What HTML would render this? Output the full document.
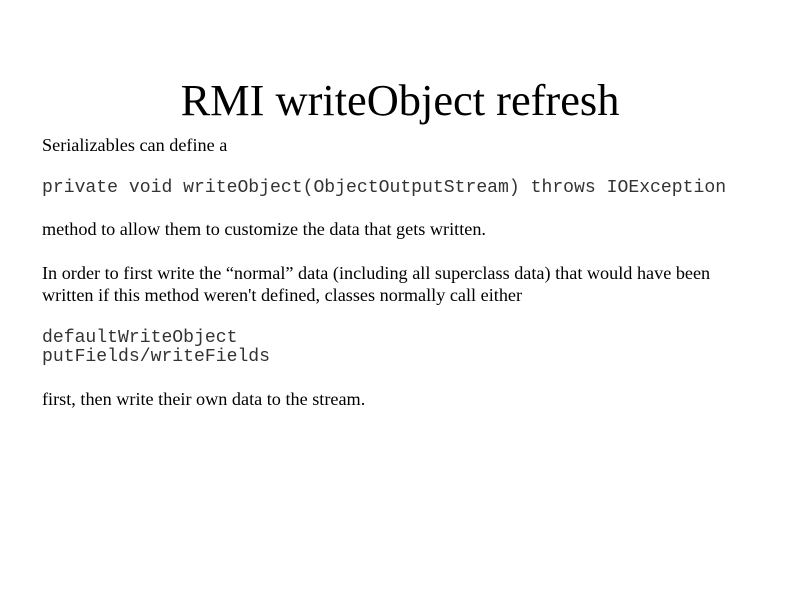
<!DOCTYPE html>
<html><head><style>
body{margin:0;width:800px;height:600px;background:#fff;position:relative;font-family:"Liberation Serif",serif;color:#000}
div{position:absolute;white-space:pre}
.t{font-size:18.2px;left:42px}
.m{font-family:"Liberation Mono",monospace;font-size:18.1px;left:42px;color:#333}
</style></head><body>
<div style="left:0;width:800px;text-align:center;top:74px;font-size:44.4px;line-height:52px">RMI writeObject refresh</div>
<div class="t" style="top:135px">Serializables can define a</div>
<div class="m" style="top:178px">private void writeObject(ObjectOutputStream) throws IOException</div>
<div class="t" style="top:219px">method to allow them to customize the data that gets written.</div>
<div class="t" style="top:263px">In order to first write the “normal” data (including all superclass data) that would have been</div>
<div class="t" style="top:285px">written if this method weren't defined, classes normally call either</div>
<div class="m" style="top:328px">defaultWriteObject</div>
<div class="m" style="top:347px">putFields/writeFields</div>
<div class="t" style="top:389px">first, then write their own data to the stream.</div>
</body></html>
